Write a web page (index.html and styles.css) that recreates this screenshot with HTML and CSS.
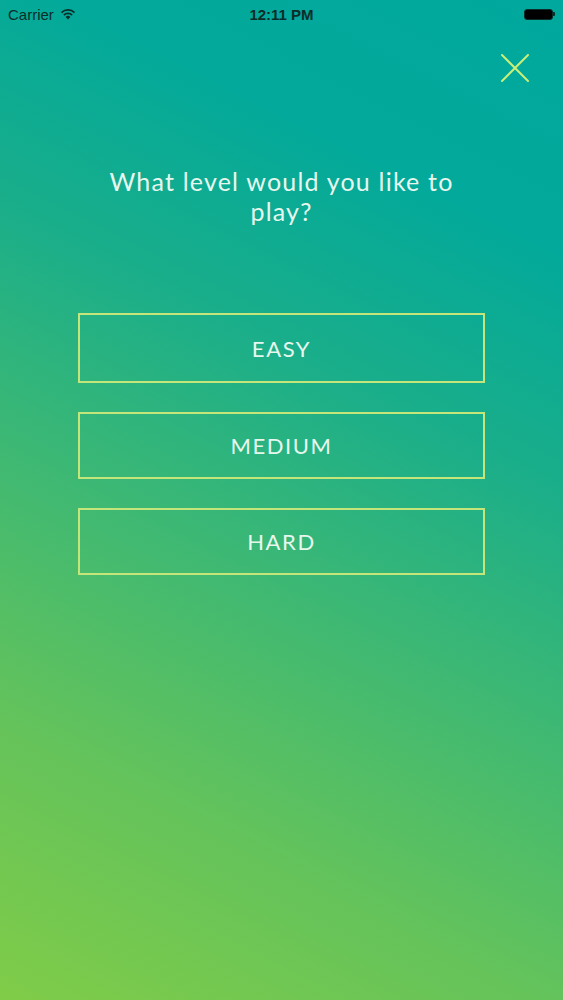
FILE: index.html
```html
<!DOCTYPE html>
<html>
<head>
<meta charset="utf-8">
<link rel="stylesheet" href="styles.css">
</head>
<body>
<div class="screen">
  <div class="status">
    <div class="status-left">
      <span class="carrier">Carrier</span>
      <svg class="wifi" width="16" height="12" viewBox="0 0 16 12">
        <path d="M8 11.5 L5.6 8.9 A3.4 3.4 0 0 1 10.4 8.9 Z" fill="#0b2d2a"/>
        <path d="M3.9 7.1 A5.8 5.8 0 0 1 12.1 7.1" stroke="#0b2d2a" stroke-width="1.8" fill="none"/>
        <path d="M1.5 4.6 A9.2 9.2 0 0 1 14.5 4.6" stroke="#0b2d2a" stroke-width="1.8" fill="none"/>
      </svg>
    </div>
    <div class="time">12:11 PM</div>
    <div class="status-right">
      <div class="battery"><div class="battery-fill"></div></div>
      <div class="battery-nub"></div>
    </div>
  </div>
  <div class="close-row">
    <svg class="close" width="28" height="28" viewBox="0 0 28 28">
      <path d="M1 1 L27 27 M27 1 L1 27" stroke="#c9ef78" stroke-width="2" stroke-linecap="round"/>
    </svg>
  </div>
  <h1 class="title">What level would you like to<br>play?</h1>
  <div class="levels">
    <div class="level level-easy">EASY</div>
    <div class="level">MEDIUM</div>
    <div class="level">HARD</div>
  </div>
</div>
</body>
</html>
```

FILE: styles.css
```css
html, body {
  margin: 0;
  padding: 0;
}
body {
  width: 563px;
  height: 1000px;
  overflow: hidden;
}
.screen {
  width: 563px;
  height: 1000px;
  background: linear-gradient(27deg, #80cc48 0%, #64c35b 22%, #40b972 42%, #1aae8a 62%, #03a99a 80%, #00a89d 100%);
  font-family: Lato, "Open Sans", sans-serif;
  color: #e9f6ee;
}
.status {
  height: 28px;
  display: flex;
  align-items: center;
  justify-content: space-between;
  padding: 0 8px;
  font-family: "Liberation Sans", Arial, sans-serif;
  font-size: 15px;
  color: #0b2d2a;
}
.status-left {
  display: flex;
  align-items: center;
  gap: 6px;
  width: 120px;
}
.time {
  font-weight: bold;
  font-size: 15px;
}
.status-right {
  width: 120px;
  display: flex;
  justify-content: flex-end;
  align-items: center;
}
.battery {
  width: 29px;
  height: 11px;
  border: 1px solid #0b2d2a;
  border-radius: 3px;
  padding: 1px;
  box-sizing: border-box;
  background: #000;
}
.battery-fill {
  width: 100%;
  height: 100%;
  background: #000;
  border-radius: 1px;
}
.battery-nub {
  width: 2px;
  height: 4px;
  background: #0b2d2a;
  border-radius: 0 1px 1px 0;
}
.close-row {
  display: flex;
  justify-content: flex-end;
  padding: 26px 34px 0 0;
  height: 28px;
}
.title {
  margin: 84px 0 0;
  text-align: center;
  font-weight: normal;
  font-size: 25px;
  line-height: 30px;
  letter-spacing: 1.2px;
  color: #e7f7ee;
}
.levels {
  display: flex;
  flex-direction: column;
  gap: 29px;
  margin: 87px 78px 0;
}
.level {
  height: 67px;
  box-sizing: border-box;
  border: 2.5px solid #c3e57a;
  display: flex;
  align-items: center;
  justify-content: center;
  font-size: 22px;
  letter-spacing: 1.6px;
  color: #e7f7ee;
}
.level-easy {
  height: 70px;
}
```
